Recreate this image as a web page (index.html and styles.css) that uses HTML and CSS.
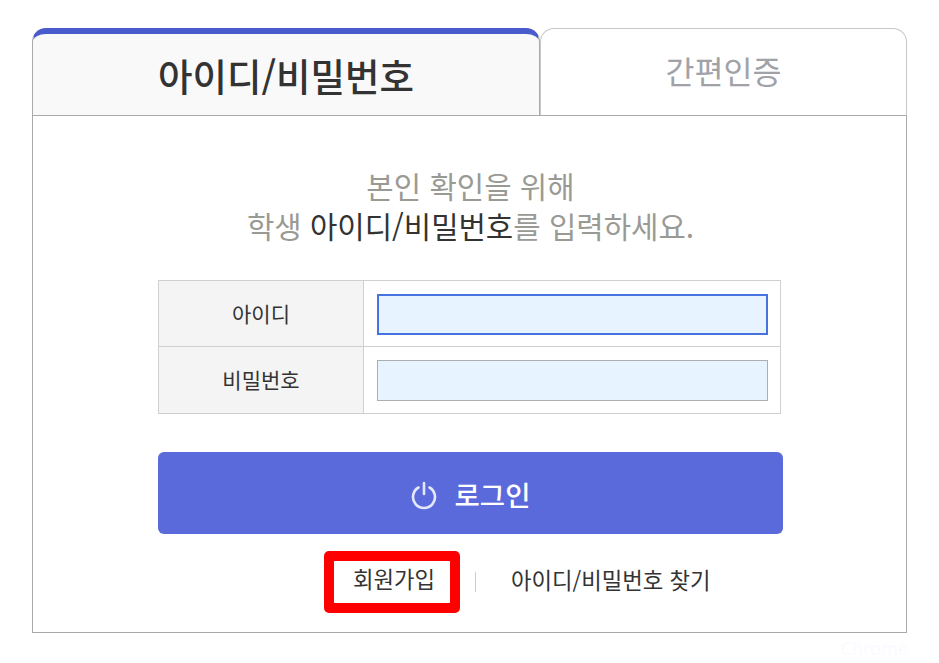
FILE: index.html
```html
<!DOCTYPE html>
<html lang="ko">
<head>
  <meta charset="UTF-8">
  <meta name="viewport" content="width=device-width, initial-scale=1.0">
  <title>로그인</title>
  <link rel="stylesheet" href="styles.css">
</head>
<body>
  <div class="login">
    <div class="tabs">
      <div class="tab tab-active">아이디/비밀번호</div>
      <div class="tab tab-simple">간편인증</div>
    </div>

    <div class="panel">
      <p class="guide">본인 확인을 위해<br>학생 <em>아이디/비밀번호</em>를 입력하세요.</p>

      <div class="fields">
        <div class="field-row">
          <label class="field-label" for="userId">아이디</label>
          <div class="field-cell cell-first"><input class="field-input is-focus" type="text" id="userId"></div>
        </div>
        <div class="field-row">
          <label class="field-label" for="userPw">비밀번호</label>
          <div class="field-cell"><input class="field-input" type="password" id="userPw"></div>
        </div>
      </div>

      <button class="login-btn" type="button">
        <svg class="power" width="28" height="32" viewBox="1 0 28 32" fill="none" stroke="currentColor" stroke-width="2.6" stroke-linecap="round">
          <path d="M8.5 8.5a11 11 0 1 0 11 0"/>
          <path d="M14 4v11"/>
        </svg>
        <span class="login-text">로그인</span>
      </button>

      <div class="links">
        <a class="link link-join">회원가입</a>
        <span class="divider"></span>
        <a class="link link-find">아이디/비밀번호 찾기</a>
      </div>
    </div>
    <div class="watermark">Chrome</div>
  </div>
</body>
</html>
```

FILE: styles.css
```css
html, body {
  margin: 0;
  padding: 0;
  background-color: #fff;
}

body {
  font-family: "Noto Sans CJK KR", "Noto Sans", sans-serif;
  color: #333;
  height: 663px;
  overflow: hidden;
}

.login {
  width: 875px;
  padding: 28px 0 0 32px;
}

.tabs {
  display: flex;
  height: 87px;
}

.tab {
  box-sizing: border-box;
  display: flex;
  justify-content: center;
  align-items: center;
}

.tab-active {
  width: 508px;
  font-size: 37.5px;
  font-weight: 500;
  color: #333;
  background-color: #f9f9f9;
  border: 1px solid #aaa;
  border-top: 6px solid #4a5bcb;
  border-bottom: 0;
  border-radius: 14px 14px 0 0;
}

.tab-simple {
  width: 367px;
  padding-bottom: 4px;
  font-size: 31.5px;
  color: #a0a2a8;
  background-color: #fff;
  border: 1px solid #c8c8c8;
  border-bottom: 0;
  border-radius: 14px 14px 0 0;
}

.panel {
  box-sizing: border-box;
  height: 518px;
  padding: 49px 123px 0 125px;
  border: 1px solid #aaa;
}

.guide {
  margin: 0 0 35px;
  text-align: center;
  font-size: 29.75px;
  line-height: 40px;
  color: #9a9a94;
}

.guide em {
  font-style: normal;
  color: #333;
}

.fields {
  width: 623px;
  box-sizing: border-box;
  border: 1px solid #d0d0d0;
}

.field-row {
  display: flex;
  height: 65px;
}

.field-row + .field-row {
  height: 66px;
  border-top: 1px solid #d0d0d0;
}

.field-label {
  box-sizing: border-box;
  width: 205px;
  padding-bottom: 2px;
  display: flex;
  justify-content: center;
  align-items: center;
  font-size: 21px;
  background-color: #f4f4f4;
  border-right: 1px solid #d0d0d0;
}

.field-cell {
  flex: 1;
  display: flex;
  align-items: center;
  padding: 0 12px 0 13px;
}

.cell-first {
  padding-top: 2px;
}

.field-input {
  box-sizing: border-box;
  width: 100%;
  height: 41px;
  margin: 0;
  padding: 0 8px;
  background-color: #e7f3fe;
  border: 1px solid #aeaeae;
  outline: none;
}

.field-input.is-focus {
  border: 2px solid #4673e0;
}

.login-btn {
  width: 625px;
  height: 82px;
  margin-top: 38px;
  display: flex;
  justify-content: center;
  align-items: center;
  gap: 16px;
  padding: 0;
  border: none;
  border-radius: 6px;
  background-color: #5a6adb;
  color: #fff;
  font-family: inherit;
  font-size: 27.5px;
  font-weight: 500;
}

.login-text {
  padding-top: 2px;
}

.power {
  color: #e4e7fa;
  margin-top: 3px;
}

.links {
  display: flex;
  align-items: center;
  margin-top: 17px;
  padding-left: 166px;
}

.link {
  font-size: 22.3px;
  color: #333;
}

.link-join {
  box-sizing: border-box;
  width: 136px;
  height: 62px;
  padding: 0 0 8px 4px;
  display: flex;
  justify-content: center;
  align-items: center;
  border: 10px solid #f00;
  border-radius: 5px;
}

.link-find {
  margin-bottom: 6px;
}

.divider {
  width: 1px;
  height: 20px;
  margin: 0 35px 0 15px;
  background-color: #ccc;
}

.watermark {
  margin: 3px -1px 0 0;
  text-align: right;
  font-family: "Noto Sans", sans-serif;
  font-size: 18px;
  line-height: 24px;
  color: #fafaff;
}
```
